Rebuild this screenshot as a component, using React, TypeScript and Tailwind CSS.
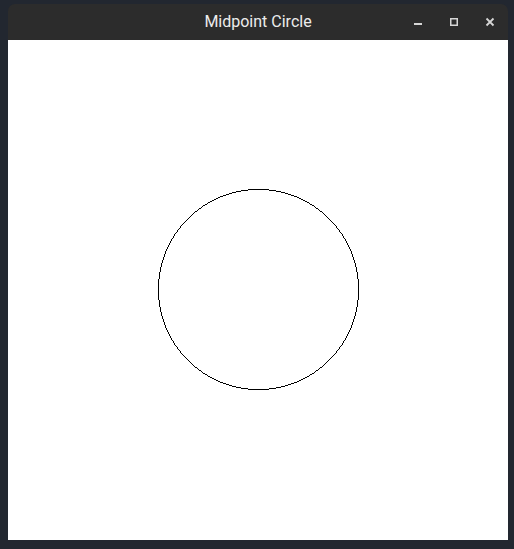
import React from 'react';

// midpoint circle algorithm -> list of 1px squares
const circlePath = (cx: number, cy: number, r: number) => {
  const pts = new Set<string>();
  let x = r;
  let y = 0;
  let p = 1 - r;
  const plot = (a: number, b: number) => {
    [
      [a, b], [-a, b], [a, -b], [-a, -b],
      [b, a], [-b, a], [b, -a], [-b, -a],
    ].forEach(([dx, dy]) => pts.add(`${cx + dx},${cy + dy}`));
  };
  while (x >= y) {
    plot(x, y);
    y++;
    if (p <= 0) {
      p += 2 * y + 1;
    } else {
      x--;
      p += 2 * y - 2 * x + 1;
    }
  }
  return Array.from(pts)
    .map(s => {
      const [a, b] = s.split(',');
      return `M${a} ${b}h1v1h-1z`;
    })
    .join('');
};

const App: React.FC = () => {
  const d = circlePath(250, 249, 100);

  return (
    <div className="w-[514px] h-[549px] bg-[#222730] pt-1 px-2 font-['Roboto',sans-serif]">
      <div className="w-[500px] flex flex-col">
        <div className="h-9 bg-[#2c2c2c] rounded-t-[7px] relative flex items-center justify-center">
          <span className="text-[16px] text-[#ececec] leading-none -mt-[1px]">Midpoint Circle</span>
          <div className="absolute right-0 top-0 h-9 flex items-center">
            <button className="w-9 h-9 flex items-center justify-center">
              <svg width="10" height="10" viewBox="0 0 10 10">
                <rect x="1" y="6" width="8" height="2" fill="#d6d6d6" />
              </svg>
            </button>
            <button className="w-9 h-9 flex items-center justify-center">
              <svg width="10" height="10" viewBox="0 0 10 10">
                <rect x="1.75" y="1.75" width="6.5" height="6.5" fill="none" stroke="#d6d6d6" strokeWidth="1.5" />
              </svg>
            </button>
            <button className="w-9 h-9 flex items-center justify-center">
              <svg width="10" height="10" viewBox="0 0 10 10">
                <path d="M1.5 1.5L8.5 8.5M8.5 1.5L1.5 8.5" stroke="#d6d6d6" strokeWidth="1.8" />
              </svg>
            </button>
          </div>
        </div>
        <div className="h-[500px] bg-white">
          <svg width="500" height="500" viewBox="0 0 500 500" shapeRendering="crispEdges">
            <path d={d} fill="#000" />
          </svg>
        </div>
      </div>
    </div>
  );
};

export default App;
